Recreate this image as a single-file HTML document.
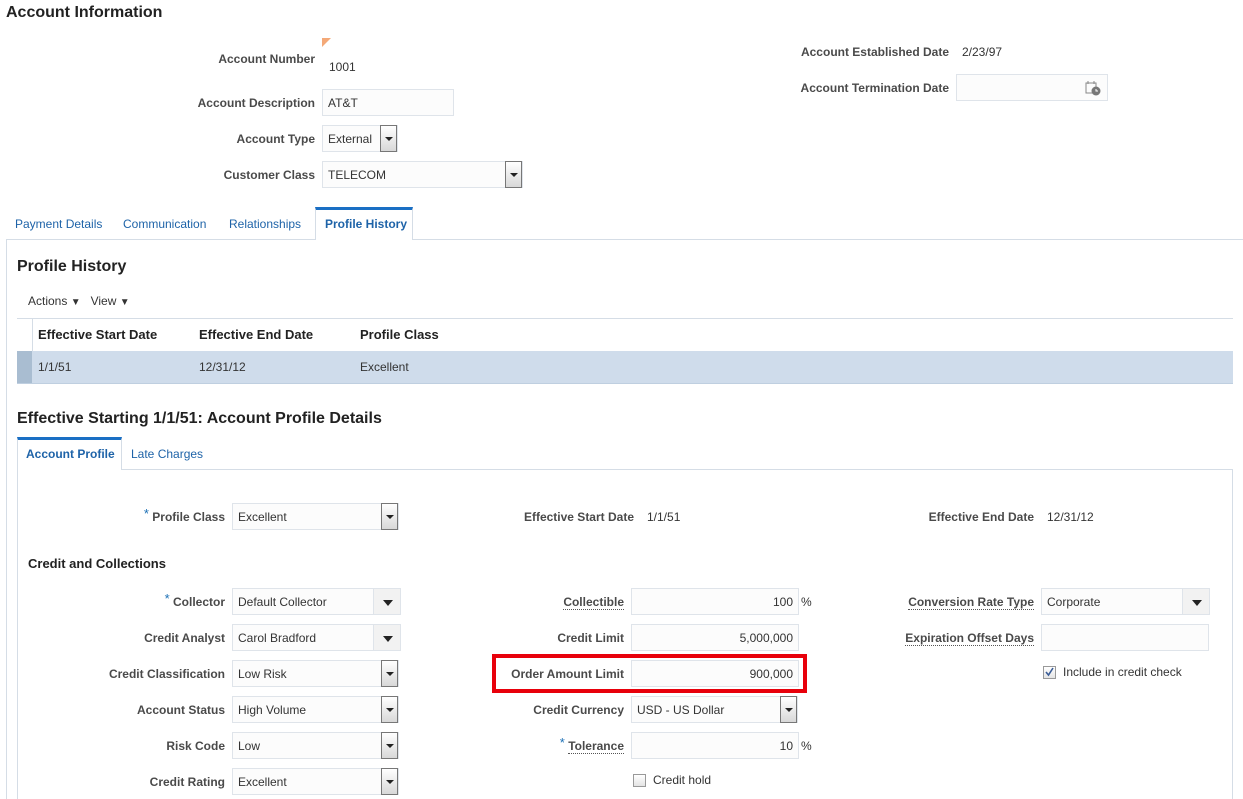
<!DOCTYPE html>
<html><head><meta charset="utf-8">
<style>
*{box-sizing:border-box;margin:0;padding:0}
html,body{width:1243px;height:799px;overflow:hidden}
body{background:#fff;font-family:"Liberation Sans",Arial,sans-serif;font-size:12px;color:#333;position:relative}
.a{position:absolute;white-space:nowrap}
.lbl{position:absolute;font-weight:bold;color:#4a4a4a;text-align:right;white-space:nowrap;line-height:14px}
.val{position:absolute;color:#333;white-space:nowrap;line-height:14px}
.inp{position:absolute;border:1px solid #dfe4ea;background:#fcfcfc;height:27px;line-height:27px;padding:0 5px;color:#333;white-space:nowrap}
.r{text-align:right}
.ob{position:absolute;top:-1px;right:0;width:17px;height:27px;border:1px solid #777;background:linear-gradient(#fff,#d8d8d8)}
.ob:after{content:"";position:absolute;left:4px;top:11px;border-left:4px solid transparent;border-right:4px solid transparent;border-top:4px solid #222}
.nb{position:absolute;top:-1px;right:-1px;width:28px;height:27px;border:1px solid #dfe4ea;background:#f2f2f2}
.nb:after{content:"";position:absolute;left:9px;top:11px;border-left:5px solid transparent;border-right:5px solid transparent;border-top:6px solid #222}
.h{position:absolute;font-weight:bold;color:#222;white-space:nowrap}
.u{border-bottom:1px dotted #555}
.star{color:#1a6fb5;font-weight:normal;font-size:13px;position:relative;top:-3px}
.tab{position:absolute;color:#1e63a8;white-space:nowrap}
.cb{position:absolute;width:13px;height:13px;border:1px solid #999;background:linear-gradient(#fff,#e4e4e4)}
</style></head><body>

<div class="h" style="left:6px;top:4px;font-size:16px">Account Information</div>

<div class="a" style="left:322px;top:38px;width:0;height:0;border-top:9px solid #f4a978;border-right:9px solid transparent"></div>
<div class="lbl" style="right:928px;top:52px">Account Number</div>
<div class="val" style="left:329px;top:60px">1001</div>
<div class="lbl" style="right:928px;top:96px">Account Description</div>
<div class="inp" style="left:322px;top:89px;width:132px">AT&amp;T</div>
<div class="lbl" style="right:928px;top:132px">Account Type</div>
<div class="inp" style="left:322px;top:125px;width:76px">External<div class="ob"></div></div>
<div class="lbl" style="right:928px;top:168px">Customer Class</div>
<div class="inp" style="left:322px;top:161px;width:201px">TELECOM<div class="ob"></div></div>

<div class="lbl" style="right:294px;top:45px">Account Established Date</div>
<div class="val" style="left:962px;top:45px">2/23/97</div>
<div class="lbl" style="right:294px;top:81px">Account Termination Date</div>
<div class="inp" style="left:956px;top:74px;width:152px">
 <svg style="position:absolute;left:128px;top:5px" width="16" height="16" viewBox="0 0 16 16"><rect x="1" y="3" width="10" height="10" fill="none" stroke="#888"/><line x1="3" y1="1" x2="3" y2="4" stroke="#888"/><line x1="9" y1="1" x2="9" y2="4" stroke="#888"/><circle cx="11" cy="11" r="4.5" fill="#777"/><path d="M11 9v2h2" stroke="#fff" fill="none"/></svg>
</div>

<div class="tab" style="left:15px;top:217px">Payment Details</div>
<div class="tab" style="left:123px;top:217px">Communication</div>
<div class="tab" style="left:229px;top:217px">Relationships</div>
<div class="a" style="left:6px;top:239px;width:1250px;height:560px;border-top:1px solid #d5dde6;border-left:1px solid #d5dde6"></div>
<div class="a" style="left:315px;top:207px;width:98px;height:33px;border:1px solid #d5dde6;border-top:3px solid #1a6fc4;border-bottom:none;background:#fff;font-weight:bold;color:#1e63a8;padding:7px 0 0 9px">Profile History</div>

<div class="h" style="left:17px;top:258px;font-size:16px">Profile History</div>
<div class="a" style="left:28px;top:294px">Actions <span style="font-size:10px">&#9660;</span>&nbsp;&nbsp; View <span style="font-size:10px">&#9660;</span></div>
<div class="a" style="left:17px;top:318px;width:1216px;height:1px;background:#d5dde6"></div>
<div class="a" style="left:32px;top:318px;width:1px;height:34px;background:#d5dde6"></div>
<div class="h" style="left:38px;top:327px;font-size:13px">Effective Start Date</div>
<div class="h" style="left:199px;top:327px;font-size:13px">Effective End Date</div>
<div class="h" style="left:360px;top:327px;font-size:13px">Profile Class</div>
<div class="a" style="left:17px;top:351px;width:1216px;height:33px;background:#cfdceb;border-bottom:1px solid #bfcfe0"></div>
<div class="a" style="left:17px;top:351px;width:15px;height:32px;background:#a9bdd1"></div>
<div class="val" style="left:38px;top:360px">1/1/51</div>
<div class="val" style="left:199px;top:360px">12/31/12</div>
<div class="val" style="left:360px;top:360px">Excellent</div>

<div class="h" style="left:17px;top:410px;font-size:16px">Effective Starting 1/1/51: Account Profile Details</div>
<div class="a" style="left:17px;top:469px;width:1216px;height:340px;border:1px solid #d5dde6"></div>
<div class="a" style="left:17px;top:437px;width:105px;height:33px;border:1px solid #d5dde6;border-top:3px solid #1a6fc4;border-bottom:none;background:#fff;font-weight:bold;color:#1e63a8;padding:7px 0 0 8px">Account Profile</div>
<div class="tab" style="left:131px;top:447px">Late Charges</div>

<div class="lbl" style="right:1018px;top:510px"><span class="star">*</span> Profile Class</div>
<div class="inp" style="left:232px;top:503px;width:167px">Excellent<div class="ob"></div></div>
<div class="lbl" style="right:609px;top:510px">Effective Start Date</div>
<div class="val" style="left:647px;top:510px">1/1/51</div>
<div class="lbl" style="right:209px;top:510px">Effective End Date</div>
<div class="val" style="left:1047px;top:510px">12/31/12</div>

<div class="h" style="left:28px;top:556px;font-size:13px">Credit and Collections</div>

<div class="lbl" style="right:1018px;top:595px"><span class="star">*</span> Collector</div>
<div class="inp" style="left:232px;top:588px;width:169px">Default Collector<div class="nb"></div></div>
<div class="lbl" style="right:1018px;top:631px">Credit Analyst</div>
<div class="inp" style="left:232px;top:624px;width:169px">Carol Bradford<div class="nb"></div></div>
<div class="lbl" style="right:1018px;top:667px">Credit Classification</div>
<div class="inp" style="left:232px;top:660px;width:167px">Low Risk<div class="ob"></div></div>
<div class="lbl" style="right:1018px;top:703px">Account Status</div>
<div class="inp" style="left:232px;top:696px;width:167px">High Volume<div class="ob"></div></div>
<div class="lbl" style="right:1018px;top:739px">Risk Code</div>
<div class="inp" style="left:232px;top:732px;width:167px">Low<div class="ob"></div></div>
<div class="lbl" style="right:1018px;top:775px">Credit Rating</div>
<div class="inp" style="left:232px;top:768px;width:167px">Excellent<div class="ob"></div></div>

<div class="lbl" style="right:619px;top:595px"><span class="u">Collectible</span></div>
<div class="inp r" style="left:631px;top:588px;width:168px">100</div><div class="val" style="left:801px;top:595px">%</div>
<div class="lbl" style="right:619px;top:631px">Credit Limit</div>
<div class="inp r" style="left:631px;top:624px;width:168px">5,000,000</div>
<div class="lbl" style="right:619px;top:667px">Order Amount Limit</div>
<div class="inp r" style="left:631px;top:660px;width:168px">900,000</div>
<div class="a" style="left:492px;top:654px;width:315px;height:39px;border:4px solid #e8000b"></div>
<div class="lbl" style="right:619px;top:703px">Credit Currency</div>
<div class="inp" style="left:631px;top:696px;width:167px">USD - US Dollar<div class="ob"></div></div>
<div class="lbl" style="right:619px;top:739px"><span class="star">*</span> <span class="u">Tolerance</span></div>
<div class="inp r" style="left:631px;top:732px;width:168px">10</div><div class="val" style="left:801px;top:739px">%</div>
<div class="cb" style="left:633px;top:774px"></div>
<div class="val" style="left:653px;top:773px">Credit hold</div>

<div class="lbl" style="right:209px;top:595px"><span class="u">Conversion Rate Type</span></div>
<div class="inp" style="left:1041px;top:588px;width:169px">Corporate<div class="nb"></div></div>
<div class="lbl" style="right:209px;top:631px"><span class="u">Expiration Offset Days</span></div>
<div class="inp" style="left:1041px;top:624px;width:168px"></div>
<div class="cb" style="left:1043px;top:666px"><svg width="11" height="11" style="position:absolute;left:0;top:0"><path d="M2 5l2.5 3L9 1" stroke="#3a5c96" stroke-width="1.6" fill="none"/></svg></div>
<div class="val" style="left:1063px;top:665px">Include in credit check</div>

</body></html>
